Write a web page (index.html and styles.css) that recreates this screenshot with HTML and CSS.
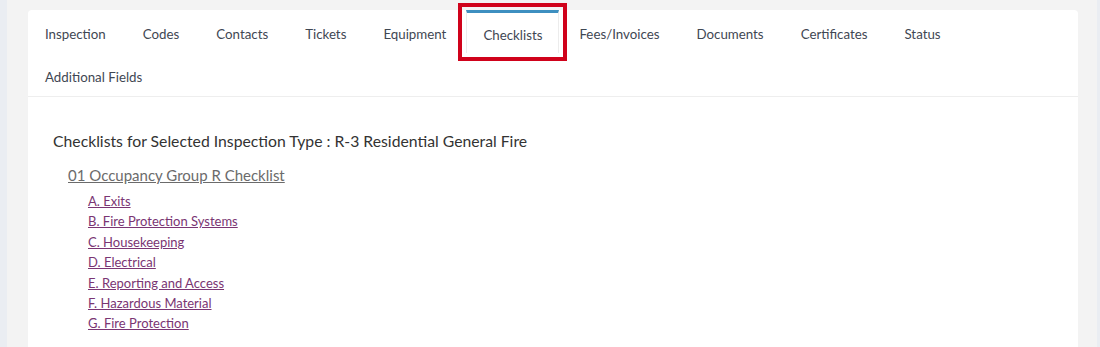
FILE: index.html
```html
<!DOCTYPE html>
<html>
<head>
<meta charset="utf-8">
<link rel="stylesheet" href="styles.css">
</head>
<body>
<div class="page">
  <div class="card">
    <ul class="tabs">
      <li class="tab">Inspection</li>
      <li class="tab">Codes</li>
      <li class="tab">Contacts</li>
      <li class="tab">Tickets</li>
      <li class="tab">Equipment</li>
      <li class="tab active">Checklists<span class="highlight"></span></li>
      <li class="tab">Fees/Invoices</li>
      <li class="tab">Documents</li>
      <li class="tab">Certificates</li>
      <li class="tab">Status</li>
      <li class="tab">Additional Fields</li>
    </ul>
    <div class="content">
      <h3 class="title">Checklists for Selected Inspection Type : R-3 Residential General Fire</h3>
      <a class="checklist" href="#">01 Occupancy Group R Checklist</a>
      <ul class="items">
        <li><a href="#">A. Exits</a></li>
        <li><a href="#">B. Fire Protection Systems</a></li>
        <li><a href="#">C. Housekeeping</a></li>
        <li><a href="#">D. Electrical</a></li>
        <li><a href="#">E. Reporting and Access</a></li>
        <li><a href="#">F. Hazardous Material</a></li>
        <li><a href="#">G. Fire Protection</a></li>
      </ul>
    </div>
  </div>
</div>
</body>
</html>
```
FILE: styles.css
```css
html, body {
  margin: 0;
  padding: 0;
  height: 100%;
}
body {
  background: #f3f3f3;
  font-family: Lato, "Liberation Sans", sans-serif;
  color: #333;
  overflow: hidden;
}
.page {
  height: 100%;
  border-left: 7px solid #eaedf2;
  border-right: 3px solid #eaedf2;
  padding: 10px 19px 0 21px;
  box-sizing: border-box;
}
.card {
  background: #fff;
  border-radius: 4px;
  width: 1050px;
  height: 400px;
}
.tabs {
  list-style: none;
  margin: 0;
  padding: 0;
  display: flex;
  flex-wrap: wrap;
  border-bottom: 1px solid #eeeeee;
}
.tab {
  position: relative;
  height: 42px;
  line-height: 46px;
  padding: 0 16px;
  margin-right: 3px;
  border: 1px solid transparent;
  border-bottom: none;
  font-size: 13.3px;
  color: #3f4753;
}
.tab.active {
  border-color: #ececec;
  border-top: 3px solid #3d8fc0;
  height: 40px;
  line-height: 44px;
}
.highlight {
  position: absolute;
  left: -9px;
  right: -9px;
  top: -10px;
  bottom: -8px;
  border: 4px solid #d0021b;
  pointer-events: none;
}
.content {
  padding: 34px 25px 0 25px;
}
.title {
  margin: 0 0 16px 0;
  font-size: 15.75px;
  font-weight: normal;
  color: #333;
}
.checklist {
  display: block;
  margin-left: 15px;
  font-size: 15px;
  color: #6b6b6b;
  text-decoration: underline;
}
.items {
  list-style: none;
  margin: 7px 0 0 35px;
  padding: 0;
}
.items li {
  font-size: 13px;
  line-height: 20.4px;
}
.items a {
  color: #7a3573;
  text-decoration: underline;
}
```
